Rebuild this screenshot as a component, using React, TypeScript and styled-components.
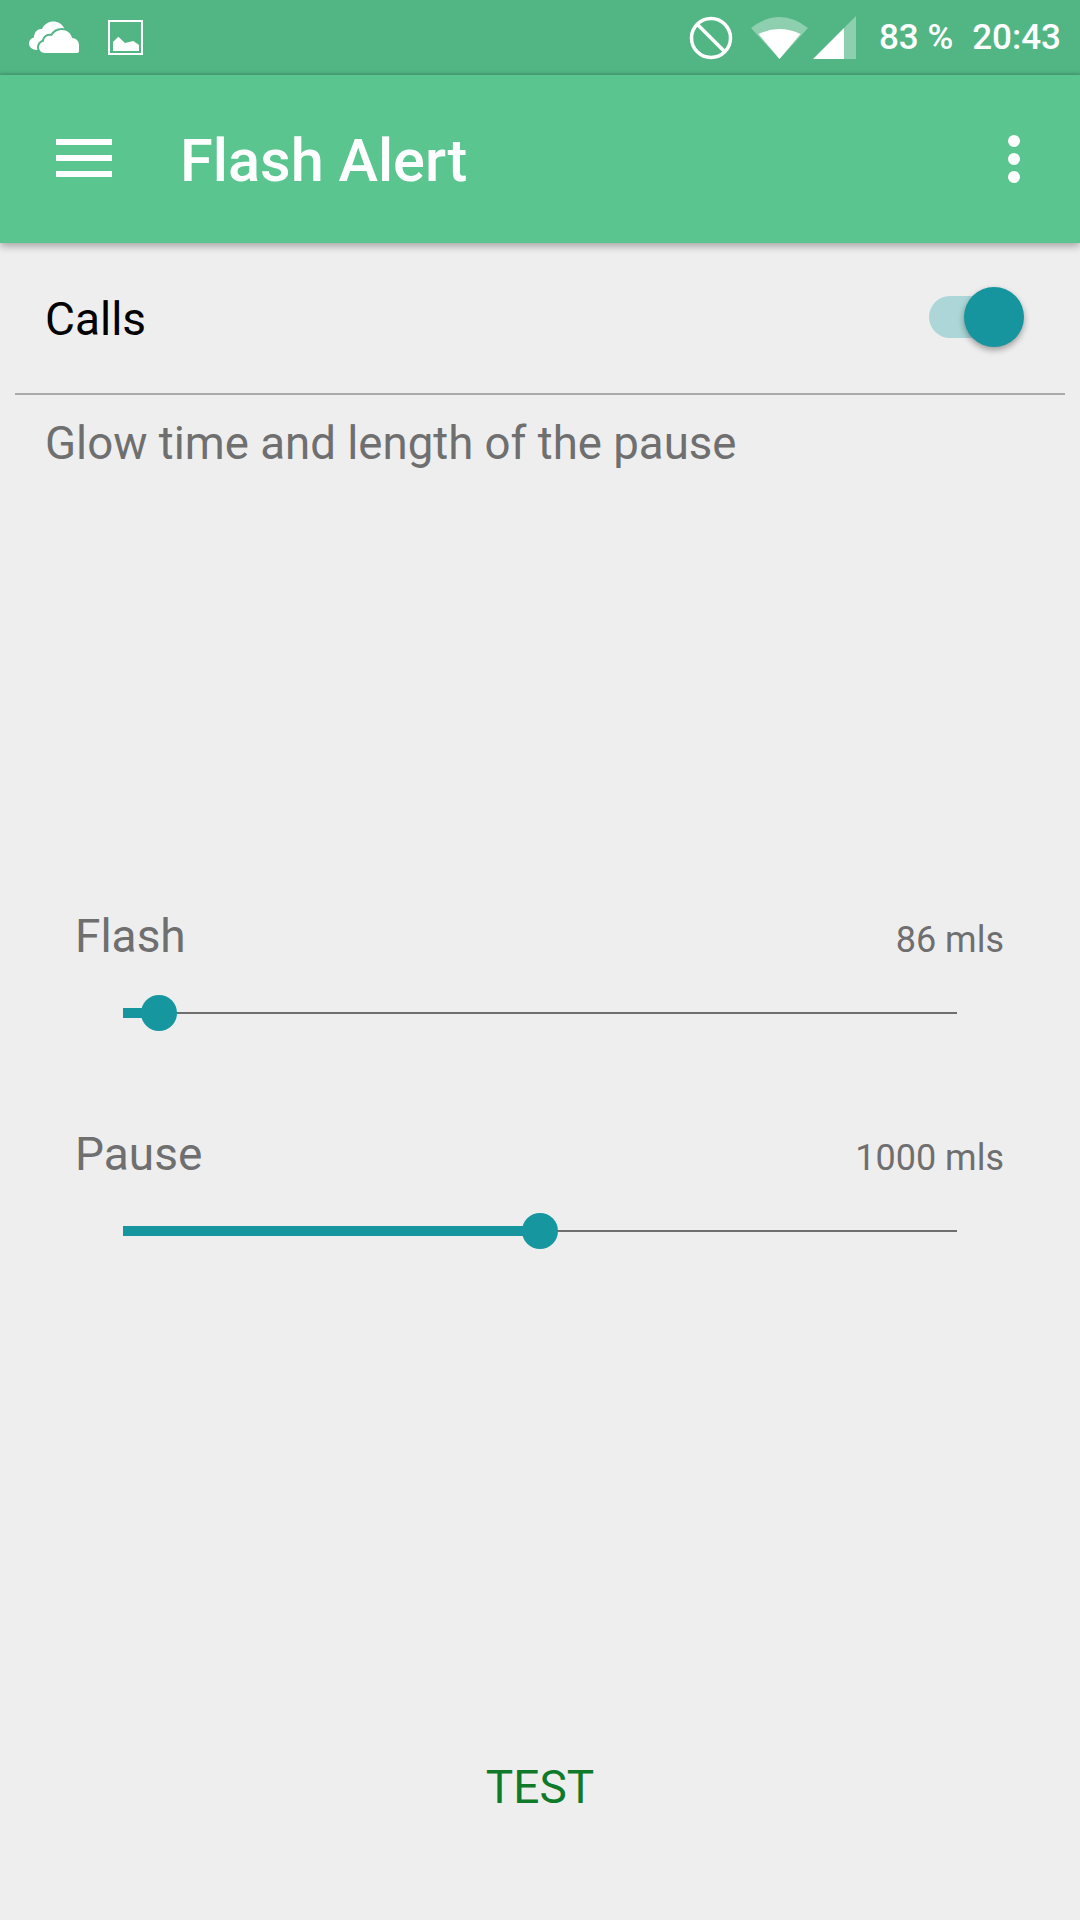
import styled, { createGlobalStyle } from "styled-components";

const GlobalStyle = createGlobalStyle`
    html, body {
        margin: 0;
        padding: 0;
        background: #eeeeef;
    }

    * {
        box-sizing: border-box;
    }
`;

const Page = styled.div`
    display: flex;
    flex-direction: column;
    width: 1080px;
    height: 1920px;
    overflow: hidden;
    background: #eeeeef;
    font-family: Roboto, "Liberation Sans", sans-serif;
`;

const StatusBar = styled.div`
    display: flex;
    align-items: center;
    justify-content: space-between;
    flex: 0 0 75px;
    padding: 0 19px 0 29px;
    background: #52b584;
    box-shadow: inset 0 -3px 2px -1px rgba(0, 0, 0, 0.1);
    color: #fff;
`;

const StatusGroup = styled.div`
    display: flex;
    align-items: center;
`;

const StatusText = styled.span<{ $gap: number }>`
    margin-left: ${(p) => p.$gap}px;
    font-size: 35px;
    font-weight: 500;
    line-height: 75px;
`;

const AppBar = styled.header`
    position: relative;
    display: flex;
    align-items: center;
    flex: 0 0 168px;
    padding: 0 60px 0 56px;
    background: #5ac58f;
    box-shadow: 0 3px 8px rgba(0, 0, 0, 0.32);
    color: #fff;
`;

const MenuIcon = styled.div`
    display: flex;
    flex-direction: column;
    gap: 10px;
    width: 56px;
    margin-top: -3px;

    & > span {
        height: 6px;
        background: #fff;
    }
`;

const AppTitle = styled.h1`
    flex: 1;
    margin: 6px 0 0 68px;
    font-size: 59.5px;
    font-weight: 500;
    line-height: 1;
`;

const MoreIcon = styled.div`
    display: flex;
    flex-direction: column;
    gap: 6px;

    & > span {
        width: 12px;
        height: 12px;
        border-radius: 50%;
        background: #fff;
    }
`;

const CallsRow = styled.div`
    display: flex;
    align-items: center;
    justify-content: space-between;
    height: 152px;
    margin: 0 15px;
    padding: 0 51px 0 30px;
    border-bottom: 2px solid #aaaaaa;
`;

const CallsLabel = styled.span`
    margin-top: 1px;
    color: #000;
    font-size: 46px;
`;

const Switch = styled.div`
    position: relative;
    width: 85px;
    height: 42px;
    margin-top: -2px;
    border-radius: 21px;
    background: #acd6d7;
`;

const SwitchThumb = styled.div`
    position: absolute;
    top: -9px;
    right: -10px;
    width: 60px;
    height: 60px;
    border-radius: 50%;
    background: #16959e;
    box-shadow: 0 3px 6px rgba(0, 0, 0, 0.35);
`;

const Hint = styled.p`
    margin: 23px 0 0 45px;
    color: #6f6f6f;
    font-size: 45.6px;
    line-height: 52px;
`;

const SliderList = styled.div`
    display: flex;
    flex-direction: column;
    gap: 96px;
    margin-top: 439px;
    padding: 0 76px;
`;

const SliderBlock = styled.div`
    display: flex;
    flex-direction: column;
    gap: 32px;
`;

const SliderHeader = styled.div`
    display: flex;
    align-items: baseline;
    justify-content: space-between;
    height: 54px;
    color: #6f6f6f;
`;

const SliderName = styled.span`
    margin-left: -1px;
    font-size: 46px;
    line-height: 54px;
`;

const SliderValue = styled.span`
    font-size: 36px;
    line-height: 54px;
`;

const Track = styled.div`
    position: relative;
    height: 36px;
    margin: 0 47px;

    &::before {
        content: "";
        position: absolute;
        top: 17px;
        left: 0;
        right: 0;
        height: 2px;
        background: #6f6f6f;
    }
`;

const TrackFill = styled.div`
    position: absolute;
    top: 13px;
    left: 0;
    height: 10px;
    background: #16959e;
`;

const TrackThumb = styled.div`
    position: absolute;
    top: 0;
    width: 36px;
    height: 36px;
    margin-left: -18px;
    border-radius: 50%;
    background: #16979f;
`;

const Footer = styled.div`
    display: flex;
    flex: 1;
    align-items: flex-end;
    justify-content: center;
    padding-bottom: 106px;
`;

const TestButton = styled.button`
    padding: 0;
    border: 0;
    background: none;
    color: #0e7a2a;
    font-family: inherit;
    font-size: 46px;
    line-height: 54px;
`;

const CloudIcon = () => (
    <svg width="50" height="33" viewBox="0 0 50 33">
        <path
            fill="#fff"
            d="M8 29C3 29 0 26 0 22.500C0 19 2.500 17 5 16.500C5 11 9 7.500 13 8C15 3 20 .5 24 .5C29 .5 34 3 36 9L36 20L20 29Z"
        />
        <path
            fill="#fff"
            stroke="#52b584"
            strokeWidth="4"
            paintOrder="stroke"
            d="M16 32C12 32 10 29 10 26.500C10 23.500 12 21 15 20.500C15 16 19 14 23 15C25 11 29 9 33 9C38 9 42 12 43 17C47 17 50 20 50 24L50 30C50 31.500 49 32 48 32Z"
        />
    </svg>
);

const PictureIcon = () => (
    <svg width="36" height="36" viewBox="0 0 36 36" style={{ marginLeft: 29 }}>
        <rect x="1" y="1" width="33" height="33" fill="none" stroke="#fff" strokeWidth="2" />
        <path fill="#fff" d="M5 31V22L10.300 16.700L17 23L25.300 21L31 25V31Z" />
    </svg>
);

const BlockIcon = () => (
    <svg width="44" height="44" viewBox="0 0 44 44">
        <circle cx="22" cy="22" r="19.500" fill="none" stroke="#fff" strokeWidth="3.500" />
        <path d="M8.500 8.500l27 27" stroke="#fff" strokeWidth="3.500" />
    </svg>
);

const WifiIcon = () => (
    <svg width="58" height="44" viewBox="0 0 58 44" style={{ marginLeft: 18 }}>
        <path fill="#fff" fillOpacity="0.35" d="M0 12Q28.500 -10 57 12L28.500 43Z" />
        <path fill="#fff" d="M7.500 18Q28.500 8 49.500 18L28.500 43Z" />
    </svg>
);

const SignalIcon = () => (
    <svg width="44" height="44" viewBox="0 0 44 44" style={{ marginLeft: 4 }}>
        <path fill="#fff" fillOpacity="0.35" d="M43 0V43H31V12Z" />
        <path fill="#fff" d="M31 12V43H0Z" />
    </svg>
);

const sliders = [
    { name: "Flash", value: "86 mls", position: 4.3 },
    { name: "Pause", value: "1000 mls", position: 50 },
];

export default function App() {
    return (
        <Page>
            <GlobalStyle />

            <StatusBar>
                <StatusGroup>
                    <CloudIcon />
                    <PictureIcon />
                </StatusGroup>
                <StatusGroup>
                    <BlockIcon />
                    <WifiIcon />
                    <SignalIcon />
                    <StatusText $gap={22}>83 %</StatusText>
                    <StatusText $gap={19}>20:43</StatusText>
                </StatusGroup>
            </StatusBar>

            <AppBar>
                <MenuIcon>
                    <span />
                    <span />
                    <span />
                </MenuIcon>
                <AppTitle>Flash Alert</AppTitle>
                <MoreIcon>
                    <span />
                    <span />
                    <span />
                </MoreIcon>
            </AppBar>

            <CallsRow>
                <CallsLabel>Calls</CallsLabel>
                <Switch>
                    <SwitchThumb />
                </Switch>
            </CallsRow>

            <Hint>Glow time and length of the pause</Hint>

            <SliderList>
                {sliders.map((slider) => (
                    <SliderBlock key={slider.name}>
                        <SliderHeader>
                            <SliderName>{slider.name}</SliderName>
                            <SliderValue>{slider.value}</SliderValue>
                        </SliderHeader>
                        <Track>
                            <TrackFill style={{ width: `${slider.position}%` }} />
                            <TrackThumb style={{ left: `${slider.position}%` }} />
                        </Track>
                    </SliderBlock>
                ))}
            </SliderList>

            <Footer>
                <TestButton>TEST</TestButton>
            </Footer>
        </Page>
    );
}
